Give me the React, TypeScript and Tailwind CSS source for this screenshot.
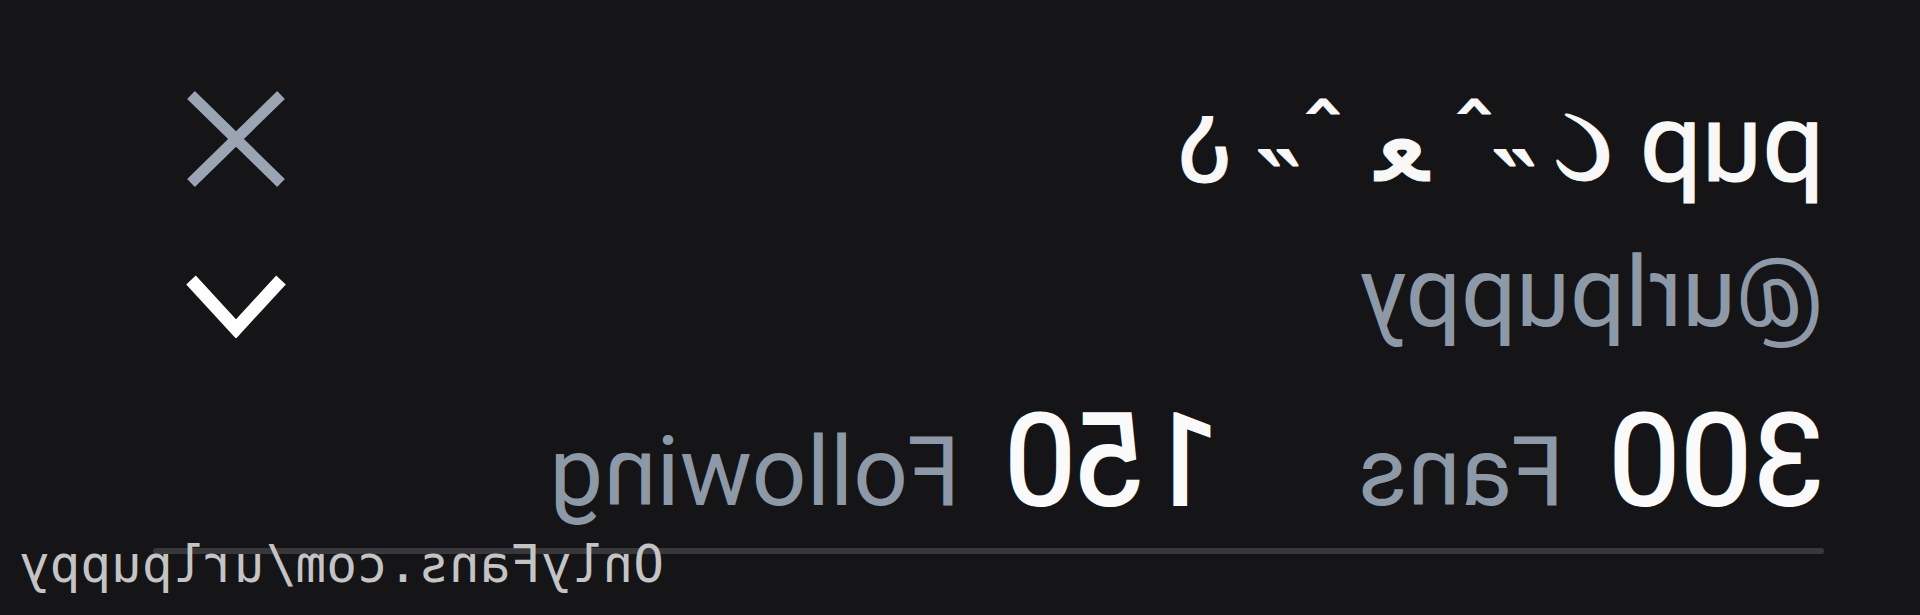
import { useState } from "react";

interface Stat {
  value: string;
  label: string;
}

const stats: Stat[] = [
  { value: "300", label: "Fans" },
  { value: "150", label: "Following" },
];

function CloseIcon() {
  return (
    <svg width="102" height="98" viewBox="0 0 102 98" fill="none">
      <path d="M6 5 L96 93 M96 5 L6 93" stroke="#9aa4b3" strokeWidth="11" />
    </svg>
  );
}

function ChevronIcon() {
  return (
    <svg width="102" height="64" viewBox="0 0 102 64" fill="none">
      <polyline
        points="6,6 51,55 96,6"
        stroke="#ffffff"
        strokeWidth="13"
        strokeLinecap="butt"
        strokeLinejoin="miter"
      />
    </svg>
  );
}

export default function App() {
  const [open, setOpen] = useState<boolean>(false);

  return (
    <div className="h-[615px] w-[1920px] overflow-hidden bg-[#151518]">
      <div className="relative h-full w-full -scale-x-100 pl-[96px] pr-[153px] pt-[89px] font-['Roboto','DejaVu_Sans',sans-serif]">
        <div className="flex justify-between">
          <div className="flex flex-col">
            <h1 className="whitespace-pre text-[110px] font-normal leading-none text-[#f8f8f8] [-webkit-text-stroke:1px_#f8f8f8]">
              pup <span className="tracking-[-4px]">૮ ˶ˆ ﻌ ˆ˶ ა</span>
            </h1>
            <p className="mt-[45px] text-[98px] leading-none text-[#8e99a8]">@urlpuppy</p>
            <div className="mt-[55px] flex items-baseline leading-none">
              {stats.map((s, i) => (
                <div key={s.label} className={i > 0 ? "ml-[138px] flex items-baseline" : "flex items-baseline"}>
                  <span className="text-[128px] font-normal text-[#fafafa] [-webkit-text-stroke:2px_#fafafa]">
                    {s.value}
                  </span>
                  <span className="ml-[44px] text-[96px] text-[#8e99a8]">{s.label}</span>
                </div>
              ))}
            </div>
          </div>
          <div className="mr-[32px] flex flex-col items-center pt-[1px]">
            <button className="block">
              <CloseIcon />
            </button>
            <button className="mt-[86px] block" onClick={() => setOpen(!open)}>
              <ChevronIcon />
            </button>
          </div>
        </div>
        <div className="mt-[23px] h-[6px] rounded-full bg-[#38383c]" />
        <span className="absolute left-[1256px] top-[539px] font-['DejaVu_Sans_Mono',monospace] text-[51px] leading-none text-[#c4c4c4]">
          OnlyFans.com/urlpuppy
        </span>
      </div>
    </div>
  );
}
